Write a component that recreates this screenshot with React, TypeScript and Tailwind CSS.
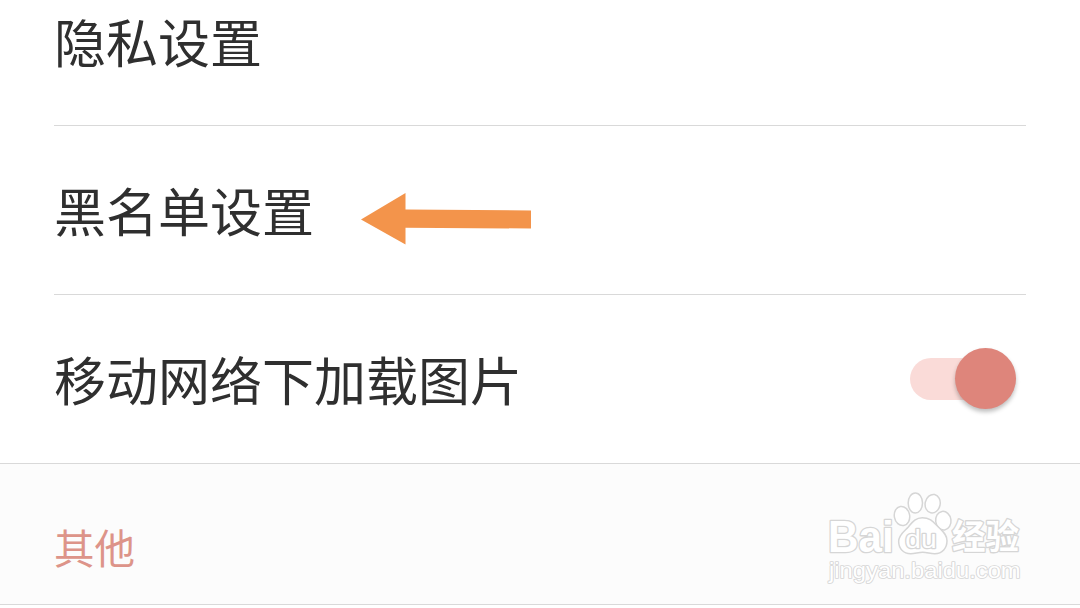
import { useState, type ReactNode } from "react";
import clsx from "clsx";

function SettingRow({ label, children, last }: { label: string; children?: ReactNode; last?: boolean }) {
  return (
    <div
      className={clsx(
        "flex shrink-0 items-center",
        last ? "h-[168px] px-[54px]" : "mx-[54px] h-[169px] border-b border-[#d9d9d9]"
      )}
    >
      <span className="-mt-px text-[52px] leading-none text-[#2f2f2f]">{label}</span>
      {children}
    </div>
  );
}

function Toggle({ checked, onChange }: { checked: boolean; onChange: (value: boolean) => void }) {
  return (
    <button
      type="button"
      role="switch"
      aria-checked={checked}
      onClick={() => onChange(!checked)}
      className={clsx(
        "mr-[10px] -mt-px ml-auto flex h-[42px] w-[106px] items-center rounded-full",
        checked ? "justify-end bg-[#fadbd8]" : "justify-start bg-[#e5e5e5]"
      )}
    >
      <span
        className={clsx(
          "size-[61px] rounded-full shadow-[0_3px_4px_rgba(0,0,0,0.25)]",
          checked ? "bg-[#de857b]" : "bg-white"
        )}
      />
    </button>
  );
}

function Arrow() {
  return (
    <svg className="mt-[18px] ml-[46px]" width="172" height="54" viewBox="0 0 172 54" fill="#f3944b">
      <path d="M1 27.5 45.5 1v16.5L171 18.5v18L45.5 35.8V52.5Z" />
    </svg>
  );
}

function Watermark() {
  return (
    <svg
      className="absolute top-[485px] left-[820px]"
      width="220"
      height="104"
      viewBox="30 15 660 312"
      fill="#fff"
      stroke="#d6d6d6"
      strokeWidth="4.5"
      strokeLinejoin="round"
    >
      <text
        x="54"
        y="217"
        fontSize="132"
        strokeWidth="8"
        paintOrder="stroke"
        textLength="197"
        lengthAdjust="spacingAndGlyphs"
        className="font-['Liberation_Sans',sans-serif] font-bold"
      >
        Bai
      </text>
      <ellipse cx="276" cy="108" rx="23" ry="29" transform="rotate(-10 276 108)" />
      <ellipse cx="316" cy="69" rx="21.5" ry="30" />
      <ellipse cx="368" cy="71" rx="22.5" ry="28" transform="rotate(12 368 71)" />
      <ellipse cx="400" cy="122" rx="23" ry="28" transform="rotate(-8 400 122)" />
      <path d="M337 113c-22 0-31 15-42 28-11 12-29 23-29 43 0 22 14 37 36 37 14 0 22-4 36-4s22 4 36 4c23 0 37-17 37-39 0-19-14-29-26-41-14-14-24-28-48-28Z" />
      <g paintOrder="stroke">
        <text
          x="286"
          y="204"
          fontSize="80"
          strokeWidth="8"
          textLength="94"
          lengthAdjust="spacingAndGlyphs"
          className="font-['Liberation_Sans',sans-serif]"
        >
          du
        </text>
        <text
          x="426"
          y="207"
          fontSize="101"
          strokeWidth="8"
          textLength="201"
          lengthAdjust="spacingAndGlyphs"
          className="font-['Noto_Sans_CJK_SC',sans-serif] font-bold"
        >
          经验
        </text>
        <text
          x="57"
          y="295"
          fontSize="65"
          strokeWidth="5"
          textLength="575"
          lengthAdjust="spacingAndGlyphs"
          className="font-['Liberation_Sans',sans-serif]"
        >
          jingyan.baidu.com
        </text>
      </g>
    </svg>
  );
}

export default function App() {
  const [loadImages, setLoadImages] = useState(true);

  return (
    <main className="relative flex h-[608px] w-[1080px] flex-col overflow-hidden bg-white font-['Noto_Sans_CJK_SC',sans-serif]">
      <div className="-mt-[43px] flex flex-col">
        <SettingRow label="隐私设置" />
        <SettingRow label="黑名单设置">
          <Arrow />
        </SettingRow>
        <SettingRow label="移动网络下加载图片" last>
          <Toggle checked={loadImages} onChange={setLoadImages} />
        </SettingRow>
      </div>

      <section className="flex h-[142px] shrink-0 items-center border-y border-[#d9d9d9] bg-[#fcfcfc] pt-[26px] pl-[54px]">
        <h2 className="text-[40.5px] leading-none text-[#dd9489]">其他</h2>
      </section>

      <Watermark />
    </main>
  );
}
